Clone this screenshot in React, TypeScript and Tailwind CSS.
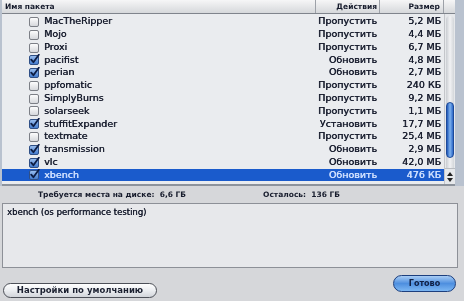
const rows = [
  { name: "MacTheRipper", on: false, action: "Пропустить", size: "5,2 МБ" },
  { name: "Mojo", on: false, action: "Пропустить", size: "4,4 МБ" },
  { name: "Proxi", on: false, action: "Пропустить", size: "6,7 МБ" },
  { name: "pacifist", on: true, action: "Обновить", size: "4,8 МБ" },
  { name: "perian", on: true, action: "Обновить", size: "2,7 МБ" },
  { name: "ppfomatic", on: false, action: "Пропустить", size: "240 КБ" },
  { name: "SimplyBurns", on: false, action: "Пропустить", size: "9,2 МБ" },
  { name: "solarseek", on: false, action: "Пропустить", size: "1,1 МБ" },
  { name: "stuffitExpander", on: true, action: "Установить", size: "17,7 МБ" },
  { name: "textmate", on: false, action: "Пропустить", size: "25,4 МБ" },
  { name: "transmission", on: true, action: "Обновить", size: "2,9 МБ" },
  { name: "vlc", on: true, action: "Обновить", size: "42,0 МБ" },
  { name: "xbench", on: true, action: "Обновить", size: "476 КБ", selected: true },
];

function Checkbox({ on }: { on: boolean }) {
  return (
    <svg width="11" height="11" viewBox="0 0 11 11" className="shrink-0">
      <defs>
        <linearGradient id="cbOff" x1="0" y1="0" x2="0" y2="1">
          <stop offset="0" stopColor="#ffffff" />
          <stop offset="1" stopColor="#d4d6da" />
        </linearGradient>
        <linearGradient id="cbOn" x1="0" y1="0" x2="0" y2="1">
          <stop offset="0" stopColor="#9cc0ef" />
          <stop offset="1" stopColor="#3f78cc" />
        </linearGradient>
      </defs>
      <rect
        x="0.5"
        y="1.5"
        width="9"
        height="9"
        rx="1.5"
        fill={on ? "url(#cbOn)" : "url(#cbOff)"}
        stroke={on ? "#2f4f86" : "#7c7f86"}
      />
      {on && (
        <path
          d="M2.2 5.6 L4.4 8.2 L9.8 0.8"
          fill="none"
          stroke="#0d1d44"
          strokeWidth="1.8"
          strokeLinecap="round"
          strokeLinejoin="round"
        />
      )}
    </svg>
  );
}

function Scrollbar() {
  return (
    <div className="w-[11px] flex flex-col bg-[#e6e8eb] border-l border-[#c4c6ca]">
      <div className="relative flex-1 mx-[1px] mt-[2px] rounded-t-[5px] bg-gradient-to-r from-[#c9ccd1] via-[#f1f2f4] to-[#d3d6da]">
        <div className="absolute left-0 right-0 top-[86px] h-[56px] rounded-[5px] bg-gradient-to-r from-[#1f57b8] via-[#7fb2ee] to-[#2c68c8] border border-[#1d4a99]" />
      </div>
      <div className="h-[16px] flex flex-col items-center justify-center gap-[2px] border-t border-[#b9bcc1]">
        <svg width="6" height="4" viewBox="0 0 6 4">
          <path d="M3 0 L6 4 L0 4 Z" fill="#222" />
        </svg>
        <svg width="6" height="4" viewBox="0 0 6 4">
          <path d="M0 0 L6 0 L3 4 Z" fill="#222" />
        </svg>
      </div>
    </div>
  );
}

export default function App() {
  const cell = "[text-shadow:0.4px_0_0_currentColor]";
  return (
    <div className="w-[464px] h-[301px] overflow-hidden bg-[#d6d7da] flex flex-col font-['DejaVu_Sans',sans-serif] text-[#161b2c] blur-[0.35px]">
      {/* package table */}
      <div className="flex h-[186px] bg-[#b9c2cf]">
        <div className="ml-[2px] w-[453px] flex flex-col bg-[#eaecef] border-b-2 border-[#8d939c]">
          <div className="flex h-[14px] bg-gradient-to-b from-[#f6f6f7] to-[#d6d8db] border-b border-[#7f848c] text-[7.5px] font-bold leading-[13px]">
            <div className="w-[313px] pl-[3px]">Имя пакета</div>
            <div className="w-[64px] text-right pr-[2px] border-l border-[#9da1a8]">Действия</div>
            <div className="w-[65px] text-right pr-[3px] border-l border-r border-[#9da1a8]">Размер</div>
          </div>
          <div className="flex flex-1">
            <div className="w-[442px] pt-[1px]">
              {rows.map((r) => (
                <div
                  key={r.name}
                  className={`flex items-center h-[12.8px] text-[9.5px] ${cell} ${
                    r.selected ? "bg-[#1a5bcc] text-[#cfe0ff]" : ""
                  }`}
                >
                  <div className="w-[313px] flex items-center pl-[27px] gap-[4px]">
                    <Checkbox on={r.on} />
                    <span>{r.name}</span>
                  </div>
                  <div className="w-[64px] text-right pr-[2px]">{r.action}</div>
                  <div className="w-[65px] text-right pr-[3px]">{r.size}</div>
                </div>
              ))}
            </div>
            <Scrollbar />
          </div>
        </div>
      </div>

      {/* disk info */}
      <div className="flex h-[17px] items-center text-[7.5px] font-bold">
        <div className="pl-[38px] w-[263px]">
          Требуется места на диске:&nbsp; 6,6 ГБ
        </div>
        <div>Осталось:&nbsp; 136 ГБ</div>
      </div>

      {/* description */}
      <div className="mx-[2px] mr-[6px] h-[65px] border border-[#8d9097] bg-[#e7e8eb] px-[4px] pt-[2px] text-[8.5px] [text-shadow:0.3px_0_0_currentColor]">
        xbench (os performance testing)
      </div>

      {/* buttons */}
      <div className="flex justify-between items-start px-[3px] mt-[7px] pr-[8px]">
        <button className="mt-[8px] h-[15px] w-[154px] rounded-full border border-[#4d5058] bg-gradient-to-b from-[#ffffff] via-[#eceef1] to-[#d2d5da] text-[8.5px] font-bold text-[#1b2030] leading-none">
          Настройки по умолчанию
        </button>
        <button className="h-[17px] w-[63px] rounded-full border border-[#1d3f7e] bg-gradient-to-b from-[#a9cdf4] via-[#4e8fdf] to-[#7cb6f2] text-[8px] font-bold text-[#0f1f44] leading-none">
          Готово
        </button>
      </div>
    </div>
  );
}
